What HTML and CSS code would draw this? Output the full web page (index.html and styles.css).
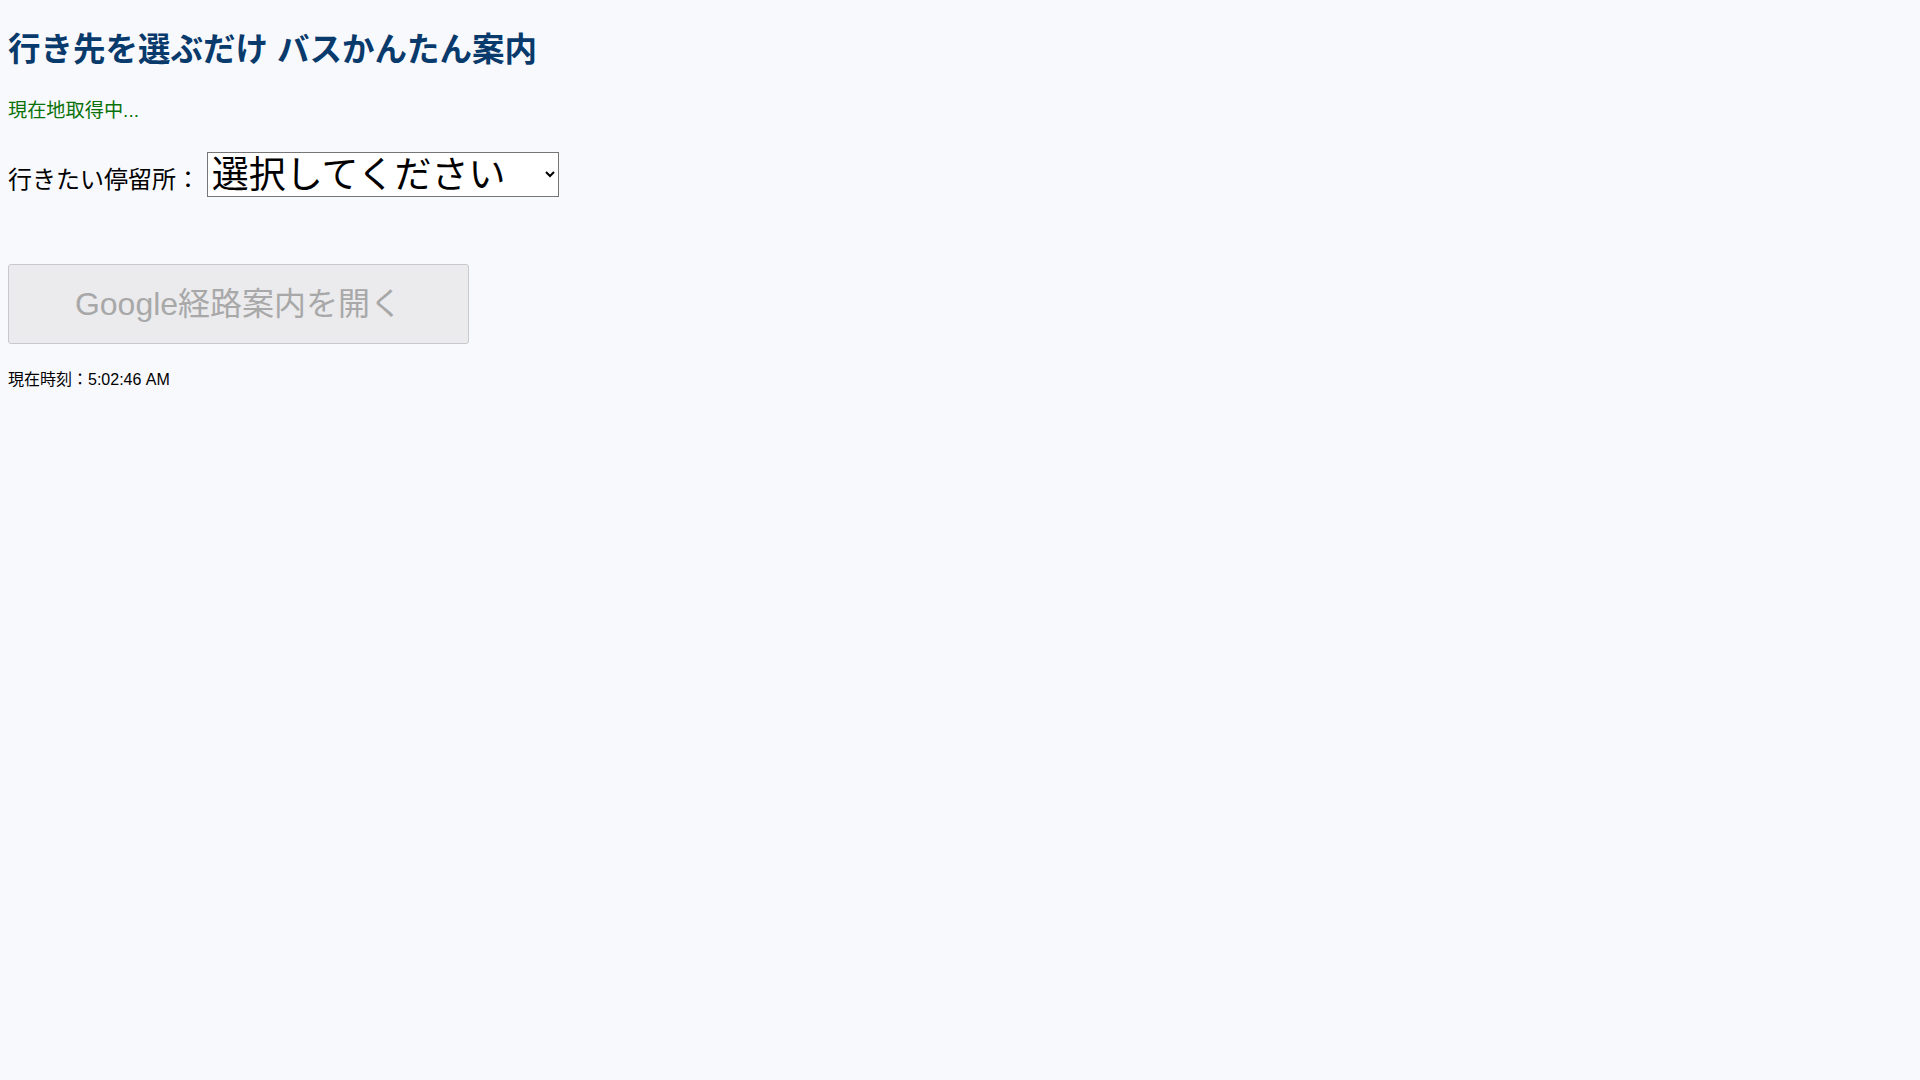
FILE: index.html
```html
<!DOCTYPE html>
<html lang="ja">
<head>
<meta charset="utf-8">
<title>行き先を選ぶだけ バスかんたん案内</title>
<link rel="stylesheet" href="styles.css">
</head>
<body>
<h1 class="title">行き先を選ぶだけ バスかんたん案内</h1>
<p class="status">現在地取得中...</p>
<div class="picker">
  <label for="stop" class="picker-label">行きたい停留所：</label>
  <select id="stop" class="stop-select">
    <option>選択してください</option>
  </select>
</div>
<div class="actions">
  <button class="route-btn" disabled>Google経路案内を開く</button>
</div>
<p class="clock">現在時刻：5:02:46 AM</p>
</body>
</html>
```

FILE: styles.css
```css
html, body {
  background: #f8f9fd;
}
body {
  margin: 8px;
  font-family: "Liberation Sans", "Noto Sans CJK JP", sans-serif;
  color: #000;
}
.title {
  font-size: 32.5px;
  font-weight: bold;
  color: #083a6c;
  margin: 15px 0 25px;
}
.status {
  font-size: 19.2px;
  color: #0b720b;
  margin: 19px 0;
}
.picker {
  font-size: 24px;
  margin: 29px 0 20px;
}
.stop-select {
  font-family: "Liberation Sans", "Noto Sans CJK JP", sans-serif;
  font-size: 37px;
  width: 352px;
  height: 45px;
  padding-top: 1px;
  background: #fff;
  color: #000;
  border: 1px solid #767676;
  border-radius: 0;
}
.actions {
  margin: 67px 0 20px;
}
.route-btn {
  font-family: "Liberation Sans", "Noto Sans CJK JP", sans-serif;
  font-size: 32px;
  width: 461px;
  height: 80px;
  padding: 0 0 7px;
  background: #ebebee;
  color: #a8a8a8;
  border: 1px solid #c9c9cd;
  border-radius: 3px;
}
.clock {
  font-size: 16px;
  margin: 22px 0;
}
```
